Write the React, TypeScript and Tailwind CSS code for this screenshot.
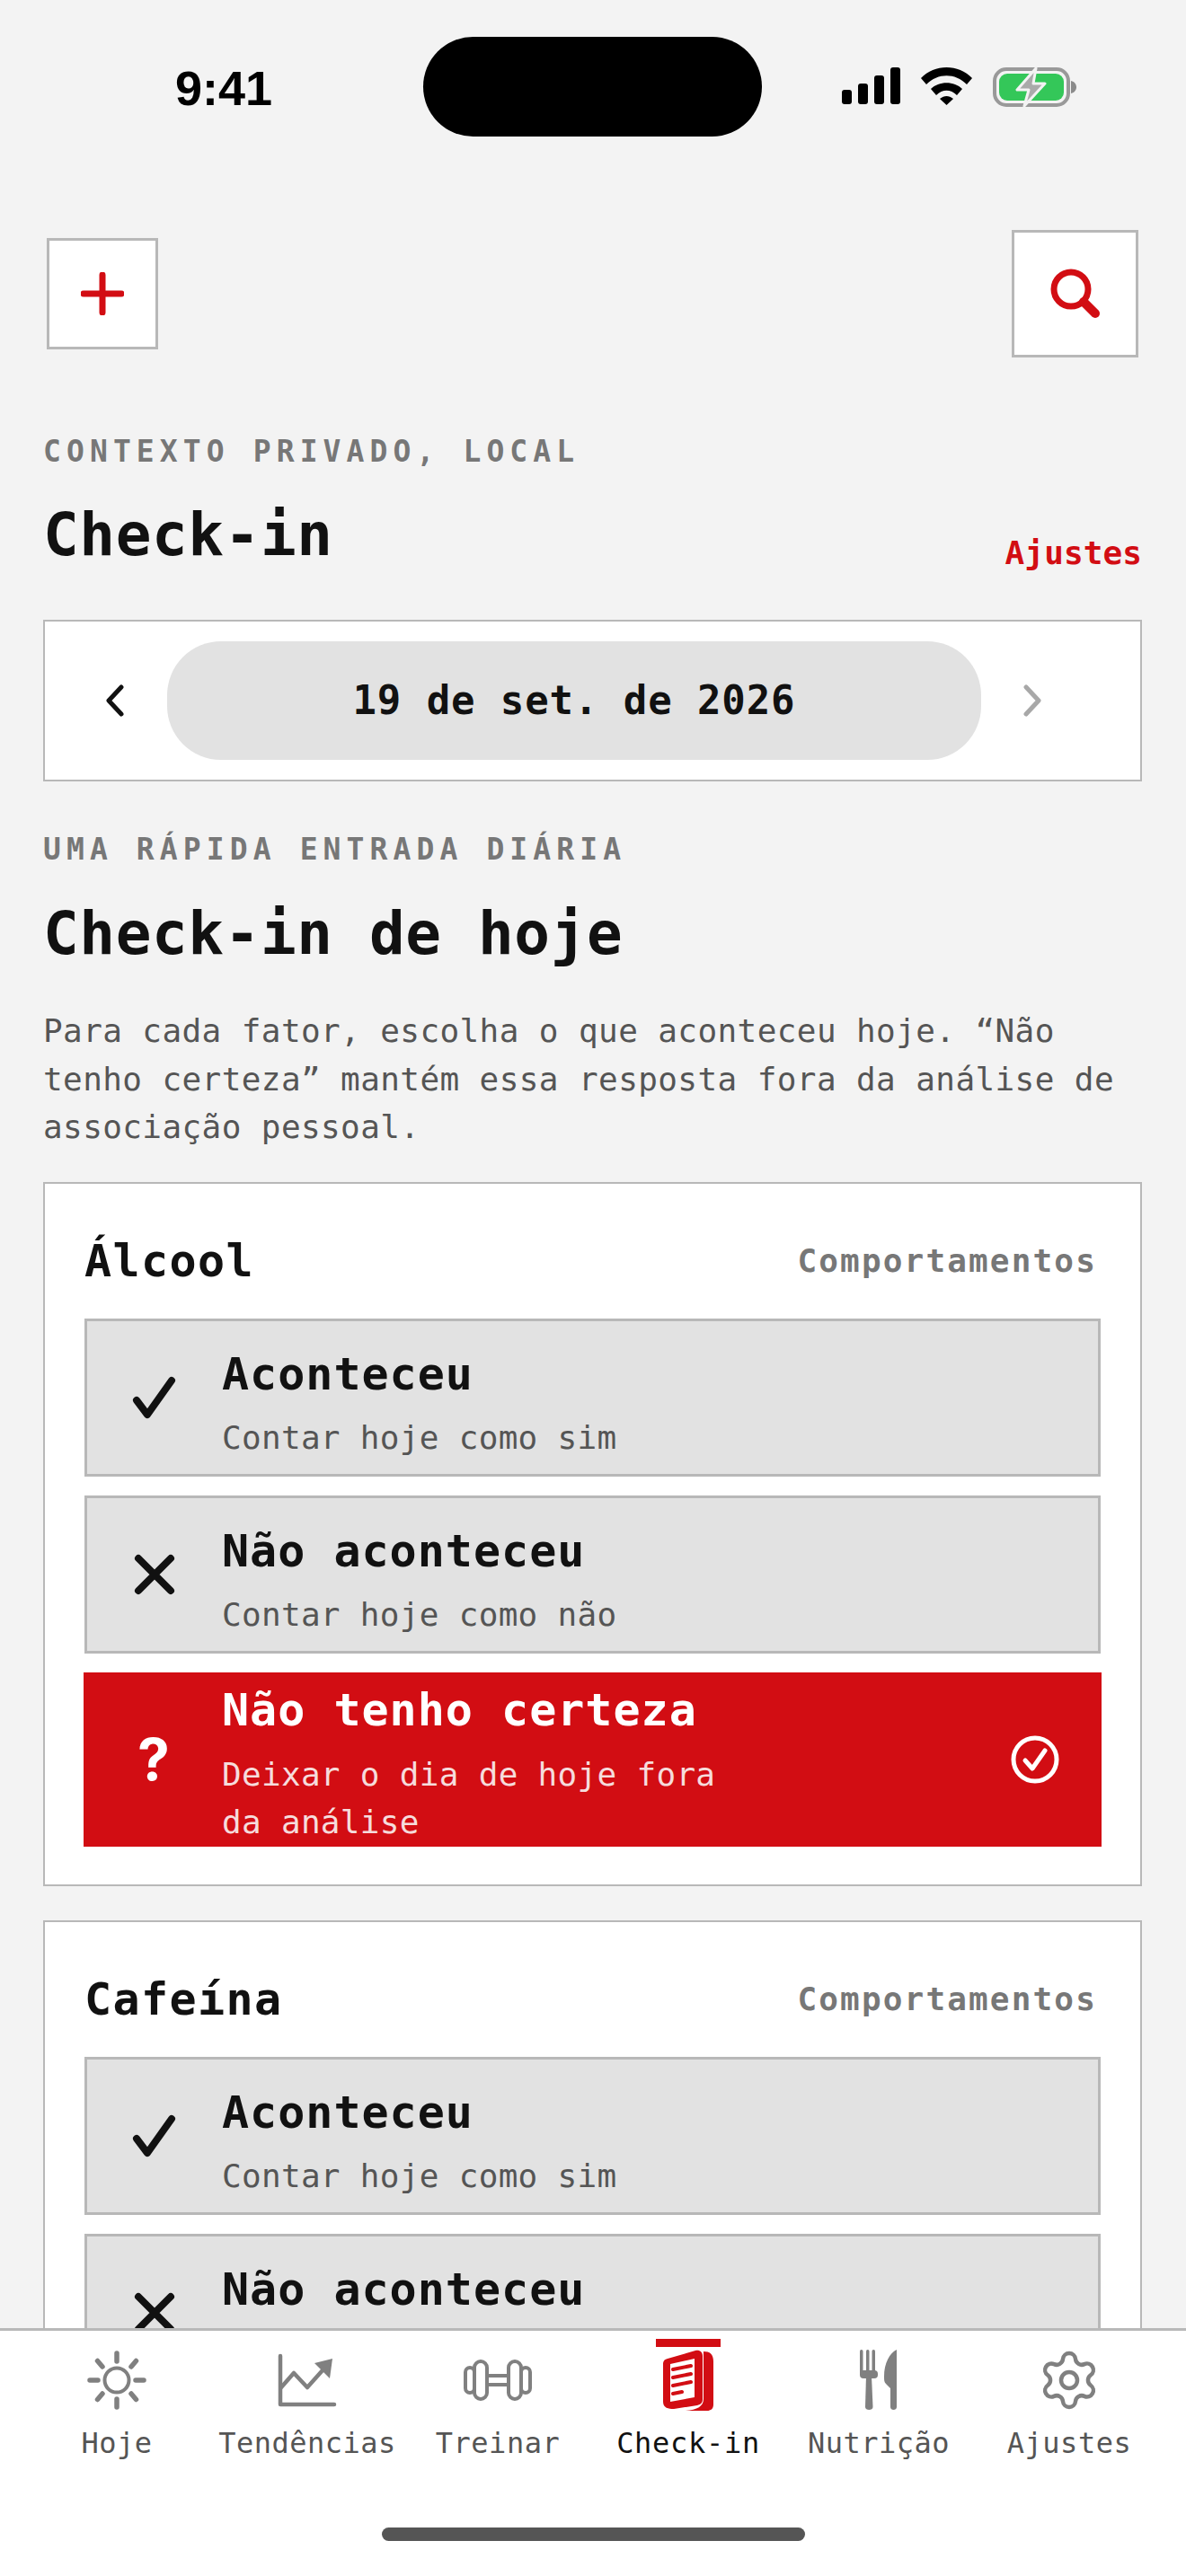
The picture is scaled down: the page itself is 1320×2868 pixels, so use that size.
import React from 'react';
import { Settings } from 'lucide-react';

const mono = "font-['DejaVu_Sans_Mono','Liberation_Mono',monospace]";

function Eyebrow({ text }: { text: string }) {
  return <p className="text-[33px] leading-[44px] font-bold tracking-[6.1px] text-[#777777]">{text}</p>;
}

function CheckIcon() {
  return (
    <svg width="50" height="48" viewBox="0 0 50 48" fill="none" stroke="#111111" strokeWidth="8" strokeLinecap="round" strokeLinejoin="round">
      <path d="M5 27 L17 43 L44 5" />
    </svg>
  );
}

function CrossIcon() {
  return (
    <svg width="46" height="46" viewBox="0 0 46 46" fill="none" stroke="#111111" strokeWidth="8" strokeLinecap="round">
      <path d="M5 5 L41 41 M41 5 L5 41" />
    </svg>
  );
}

function Option({ icon, title, sub }: { icon: React.ReactNode; title: string; sub: string }) {
  return (
    <div className="flex h-[176px] border-[3px] border-[#B8B8B8] bg-[#E2E2E2]">
      <div className="flex w-[150px] shrink-0 items-center justify-center">{icon}</div>
      <div className="pt-[26px]">
        <p className="text-[50px] leading-[66px] font-bold tracking-[1px] text-[#111111]">{title}</p>
        <p className="mt-[11px] text-[36px] leading-[53px] tracking-[0.3px] text-[#555555]">{sub}</p>
      </div>
    </div>
  );
}

function SelectedOption({ title, sub }: { title: string; sub: string }) {
  return (
    <div className="-mx-px flex h-[194px] items-center overflow-hidden bg-[#D20D13] text-white">
      <div className="flex w-[154px] shrink-0 items-center justify-center pl-[2px] font-['Inter',sans-serif] text-[64px] leading-none font-bold">?</div>
      <div className="w-[560px] self-start pt-[9px]">
        <p className="text-[50px] leading-[66px] font-bold tracking-[1px]">{title}</p>
        <p className="mt-[12px] text-[36px] leading-[53px] tracking-[0.3px] text-[#F6DCDC]">{sub}</p>
      </div>
      <div className="ml-auto mr-[47px]">
        <svg width="54" height="54" viewBox="0 0 54 54" fill="none" stroke="#FFFFFF" strokeWidth="5" strokeLinecap="round" strokeLinejoin="round">
          <circle cx="27" cy="27" r="24" />
          <path d="M16 28 L24 37 L38 17" />
        </svg>
      </div>
    </div>
  );
}

function FactorCard({ name, children }: { name: string; children: React.ReactNode }) {
  return (
    <section className="border-2 border-[#B8B8B8] bg-white px-[44px] pb-[42px] pt-[56px]">
      <div className="flex items-center justify-between pr-[4px]">
        <h3 className="text-[50px] leading-[60px] font-bold tracking-[1.4px] text-[#111111]">{name}</h3>
        <span className="text-[36px] leading-[60px] font-bold tracking-[2.15px] text-[#777777]">Comportamentos</span>
      </div>
      <div className="mt-[34px] flex flex-col gap-[21px]">{children}</div>
    </section>
  );
}

function StatusBar() {
  return (
    <div className="flex h-[256px] items-start">
      <div className="w-[471px] shrink-0 pl-[195px] pt-[67px] font-['Liberation_Sans',sans-serif] text-[54px] leading-[62px] font-bold text-black">9:41</div>
      <div className="mt-[41px] h-[111px] w-[377px] shrink-0 rounded-[56px] bg-black" />
      <div className="flex items-start pl-[89px] pt-[75px]">
        <svg width="65" height="42" viewBox="0 0 65 42" fill="#000000">
          <rect x="0" y="25" width="11" height="16" rx="3" />
          <rect x="18" y="18" width="11" height="23" rx="3" />
          <rect x="36" y="9" width="11" height="32" rx="3" />
          <rect x="54" y="0" width="11" height="41" rx="3" />
        </svg>
        <svg className="ml-[23px]" width="57" height="42" viewBox="0 0 57 42" fill="#000000">
          <path d="M0 12 C15 -4 42 -4 57 12 L51 19 C38 6 19 6 6 19 Z" />
          <path d="M11 24 C20 15 37 15 46 24 L40 31 C33 24 24 24 17 31 Z" />
          <path d="M21 35 C26 31 31 31 36 35 L28.5 42 Z" />
        </svg>
        <svg className="ml-[23px]" width="94" height="44" viewBox="0 0 94 44" fill="none">
          <rect x="2" y="2" width="82" height="40" rx="13" stroke="#999999" strokeWidth="4" />
          <rect x="7" y="7" width="72" height="30" rx="9" fill="#34C759" />
          <path d="M87 15 C91 16 93 19 93 22 C93 25 91 28 87 29 Z" fill="#8A8A8A" />
          <path d="M48 1 L27 25 L40 25 L35 43 L58 18 L45 18 Z" fill="#AAAAAA" stroke="#F3F3F3" strokeWidth="3" strokeLinejoin="round" />
        </svg>
      </div>
    </div>
  );
}

function TabIcon({ name }: { name: string }) {
  if (name === 'Hoje') {
    return (
      <svg width="66" height="66" viewBox="0 0 66 66" fill="none" stroke="#808080" strokeLinecap="round">
        <ellipse cx="33" cy="33" rx="13.5" ry="13.5" strokeWidth="4" />
        <path d="M33 3 V12 M33 54 V63 M3 33 H12 M54 33 H63 M11.5 11.5 L17 18 M54.5 11.5 L49 18 M11.5 54.5 L17 48 M54.5 54.5 L49 48" strokeWidth="5.5" />
      </svg>
    );
  }
  if (name === 'Tendências') {
    return (
      <svg width="66" height="66" viewBox="0 0 66 66" fill="none" stroke="#808080" strokeLinejoin="round" strokeLinecap="round">
        <path d="M3 6 V60 H63" strokeWidth="4.5" />
        <path d="M4 41 L18 25 L33 41 L50 22" strokeWidth="4.5" />
        <path d="M41 14 L61 9 L58 31 Z" fill="#808080" stroke="none" />
      </svg>
    );
  }
  if (name === 'Treinar') {
    return (
      <svg width="76" height="46" viewBox="0 0 76 46" fill="none" stroke="#808080" strokeWidth="4">
        <rect x="2" y="9" width="10" height="28" rx="5" />
        <rect x="12" y="2" width="14" height="42" rx="7" />
        <rect x="50" y="2" width="14" height="42" rx="7" />
        <rect x="64" y="9" width="10" height="28" rx="5" />
        <path d="M26 18 H50 M26 28 H50" />
      </svg>
    );
  }
  if (name === 'Check-in') {
    return (
      <svg width="60" height="70" viewBox="0 0 60 70" fill="none">
        <path d="M47 3 C54 3 58 6 58 14 V62 C58 67 55 69 51 69 H27 C40 68 47 64 47 56 Z" fill="#D20D13" />
        <path d="M7 11 L38 2 C43 1 46 4 46 8 V56 C46 60 44 62 40 63 L14 67 C8 67 2 66 2 59 V18 C2 14 3 12 7 11 Z" fill="#D20D13" />
        <path d="M10 17 L37 11 V54 L10 59 Z" fill="#FFFFFF" />
        <path d="M13 23 L33 19 M13 32 L33 28 M13 41 L33 37 M13 50 L23 48" stroke="#D20D13" strokeWidth="4" strokeLinecap="round" />
      </svg>
    );
  }
  if (name === 'Nutrição') {
    return (
      <svg width="42" height="70" viewBox="0 0 42 70" fill="#808080">
        <rect x="0" y="1" width="3.5" height="28" rx="1.7" />
        <rect x="7" y="1" width="3.5" height="28" rx="1.7" />
        <rect x="13.5" y="1" width="3.5" height="28" rx="1.7" />
        <rect x="0" y="24" width="20" height="9" rx="4" />
        <path d="M7 30 H13 L14.5 65 C14.5 69 6 69 6 65 Z" />
        <path d="M41 1 V65 C41 69 34 69 34 65 V44 L29 39 C27 37 27 35 27 31 C27 16 33 5 41 1 Z" />
      </svg>
    );
  }
  return <Settings size={72} color="#808080" strokeWidth={1.5} />;
}

const tabs = ['Hoje', 'Tendências', 'Treinar', 'Check-in', 'Nutrição', 'Ajustes'];

function TabBar() {
  return (
    <nav className="h-[276px] shrink-0 border-t-[3px] border-[#B8B8B8] bg-white">
      <div className="flex px-[24px]">
        {tabs.map((tab) => {
          const active = tab === 'Check-in';
          return (
            <div key={tab} className="flex w-[212px] flex-col items-center">
              <div className="mt-[9px] h-[9px] w-[72px]" style={{ background: active ? '#D20D13' : 'transparent' }} />
              <div className="flex h-[74px] items-center justify-center">
                <TabIcon name={tab} />
              </div>
              <span className={active ? 'mt-[11px] text-[32px] leading-[44px] tracking-[0.7px] text-[#111111]' : 'mt-[11px] text-[32px] leading-[44px] tracking-[0.5px] text-[#555555]'}>{tab}</span>
            </div>
          );
        })}
      </div>
      <div className="mx-auto mt-[72px] h-[15px] w-[471px] rounded-full bg-[#555555]" />
    </nav>
  );
}

export default function App() {
  return (
    <div className={`flex h-[2868px] w-[1320px] flex-col overflow-hidden bg-[#F3F3F3] ${mono}`}>
      <main className="min-h-0 flex-1 overflow-hidden">
        <StatusBar />
        <div className="flex h-[142px] items-center justify-between pl-[52px] pr-[53px]">
          <button className="flex h-[124px] w-[124px] items-center justify-center border-[3px] border-[#B8B8B8] bg-white">
            <svg width="48" height="48" viewBox="0 0 48 48" fill="none" stroke="#D20D13" strokeWidth="7" strokeLinecap="round">
              <path d="M24 3 V45 M3 24 H45" />
            </svg>
          </button>
          <button className="flex h-[142px] w-[141px] items-center justify-center border-[3px] border-[#B8B8B8] bg-white">
            <svg width="56" height="56" viewBox="0 0 56 56" fill="none" stroke="#D20D13" strokeLinecap="round">
              <circle cx="23" cy="23" r="19" strokeWidth="7" />
              <path d="M37 37 L50 50" strokeWidth="10" />
            </svg>
          </button>
        </div>

        <div className="px-[48px] pr-[49px]">
          <div className="mt-[83px]"><Eyebrow text="CONTEXTO PRIVADO, LOCAL" /></div>
          <div className="mt-[31px] flex items-end justify-between">
            <h1 className="text-[66px] leading-[80px] font-bold tracking-[0.6px] text-[#111111]">Check-in</h1>
            <a className="-mb-[2px] text-[36px] leading-[44px] font-bold tracking-[0.1px] text-[#D20D13]">Ajustes</a>
          </div>

          <div className="mt-[54px] flex h-[180px] items-center border-2 border-[#B8B8B8] bg-white pl-[57px]">
            <svg width="44" height="36" viewBox="0 0 44 36" fill="none" stroke="#111111" strokeWidth="5" strokeLinecap="round" strokeLinejoin="round">
              <path d="M28 3 L14 18 L28 33" />
            </svg>
            <div className="ml-[35px] flex h-[132px] w-[906px] items-center justify-center rounded-[60px] bg-[#E2E2E2] text-[44px] font-bold tracking-[0.9px] text-[#111111]">19 de set. de 2026</div>
            <svg className="ml-[34px]" width="44" height="36" viewBox="0 0 44 36" fill="none" stroke="#A8A8A8" strokeWidth="5" strokeLinecap="round" strokeLinejoin="round">
              <path d="M16 3 L30 18 L16 33" />
            </svg>
          </div>

          <div className="mt-[54px]"><Eyebrow text="UMA RÁPIDA ENTRADA DIÁRIA" /></div>
          <h2 className="mt-[32px] text-[66px] leading-[80px] font-bold tracking-[0.6px] text-[#111111]">Check-in de hoje</h2>
          <p className="mt-[41px] text-[36px] leading-[53.5px] tracking-[0.4px] text-[#555555]">
            Para cada fator, escolha o que aconteceu hoje. “Não<br />
            tenho certeza” mantém essa resposta fora da análise de<br />
            associação pessoal.
          </p>

          <div className="mt-[34px] flex flex-col gap-[38px]">
            <FactorCard name="Álcool">
              <Option icon={<CheckIcon />} title="Aconteceu" sub="Contar hoje como sim" />
              <Option icon={<CrossIcon />} title="Não aconteceu" sub="Contar hoje como não" />
              <SelectedOption title="Não tenho certeza" sub="Deixar o dia de hoje fora da análise" />
            </FactorCard>
            <FactorCard name="Cafeína">
              <Option icon={<CheckIcon />} title="Aconteceu" sub="Contar hoje como sim" />
              <Option icon={<CrossIcon />} title="Não aconteceu" sub="Contar hoje como não" />
            </FactorCard>
          </div>
        </div>
      </main>
      <TabBar />
    </div>
  );
}
